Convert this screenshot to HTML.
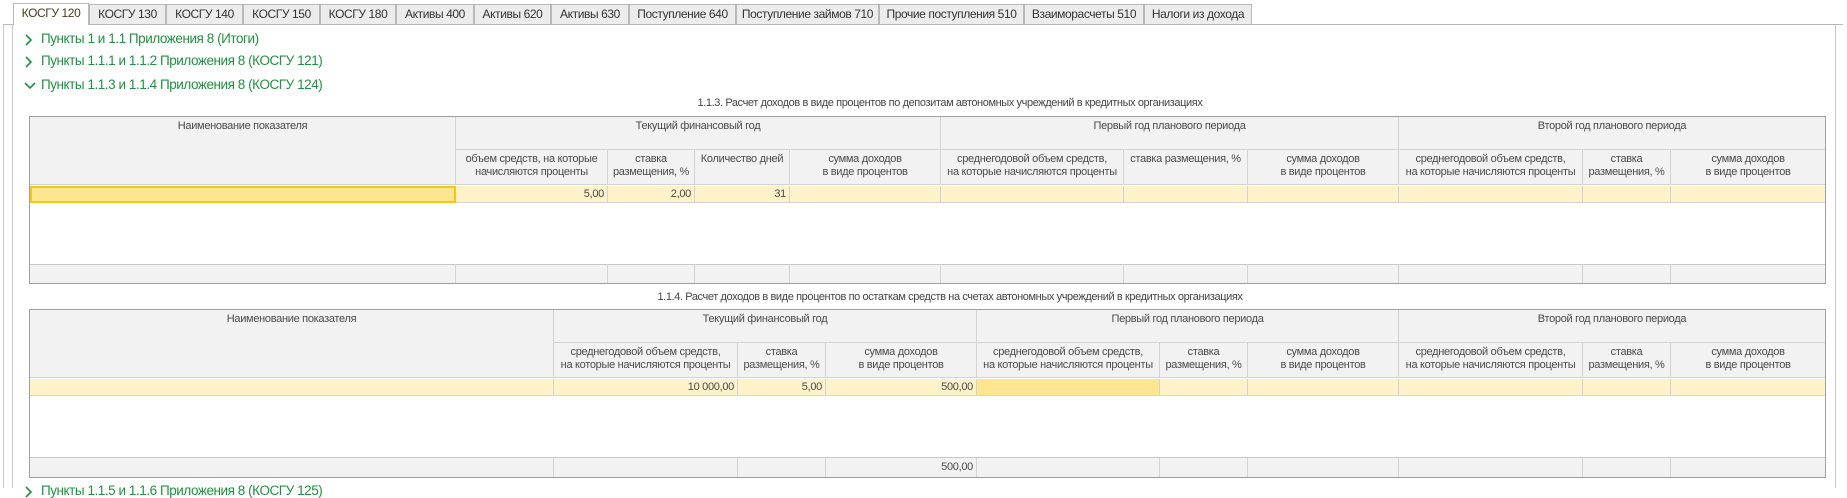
<!DOCTYPE html>
<html><head><meta charset="utf-8"><style>
*{box-sizing:border-box;margin:0;padding:0}
body{width:1847px;height:488px;background:#fff;position:relative;overflow:hidden;font-family:"Liberation Sans",Arial,sans-serif;color:#4a4a4a}
.a{position:absolute}
.tab{position:absolute;top:4px;height:20px;border:1px solid #b8b8b8;border-bottom:none;background:#ececec;font-size:12px;letter-spacing:-0.4px;line-height:19px;text-align:center;color:#333;white-space:nowrap}
.tab.act{background:#fff;top:3px;height:22px;color:#4a3a20}
.tree{position:absolute;left:24px;font-size:13.5px;letter-spacing:-0.45px;color:#1f9140;white-space:nowrap}
.tree svg{position:absolute;left:0;top:3px}
.tree span{position:absolute;left:17px;top:0}
.cap{position:absolute;font-size:11px;letter-spacing:-0.4px;color:#444;white-space:nowrap}
.c{position:absolute;border-right:1px solid #d4d4d4;border-bottom:1px solid #d4d4d4;font-size:11px;letter-spacing:-0.3px;line-height:13px;text-align:center;color:#4a4a4a;overflow:hidden;white-space:nowrap}
.h{background:#f2f2f2;padding-top:3px}
.d{background:#fdf2c8;text-align:right;padding-right:3px;line-height:17px}
.f{background:#f2f2f2;text-align:right;padding-right:3px;line-height:18px}
.box{position:absolute;border:1px solid #a0a0a0;background:#fff}
</style></head><body>
<div class="a" style="left:3px;top:24px;width:1px;height:464px;background:#c8c8c8"></div>
<div class="a" style="left:12px;top:24px;width:1px;height:464px;background:#c8c8c8"></div>
<div class="a" style="left:1835px;top:24px;width:1px;height:464px;background:#c8c8c8"></div>
<div class="a" style="left:3px;top:24px;width:1840px;height:1px;background:#b8b8b8"></div>

<div class="tab act" style="left:13px;width:76px">КОСГУ 120</div>
<div class="tab" style="left:89px;width:77px">КОСГУ 130</div>
<div class="tab" style="left:166px;width:77px">КОСГУ 140</div>
<div class="tab" style="left:243px;width:77px">КОСГУ 150</div>
<div class="tab" style="left:320px;width:76px">КОСГУ 180</div>
<div class="tab" style="left:396px;width:78px">Активы 400</div>
<div class="tab" style="left:474px;width:77px">Активы 620</div>
<div class="tab" style="left:551px;width:78px">Активы 630</div>
<div class="tab" style="left:629px;width:107px">Поступление 640</div>
<div class="tab" style="left:736px;width:143px">Поступление займов 710</div>
<div class="tab" style="left:879px;width:145px">Прочие поступления 510</div>
<div class="tab" style="left:1024px;width:120px">Взаиморасчеты 510</div>
<div class="tab" style="left:1144px;width:108px">Налоги из дохода</div>

<div class="tree" style="top:31px"><svg width="10" height="12"><path d="M2 1 L7 6 L2 11" fill="none" stroke="#1f9140" stroke-width="1.6"/></svg><span>Пункты 1 и 1.1 Приложения 8 (Итоги)</span></div>
<div class="tree" style="top:53px"><svg width="10" height="12"><path d="M2 1 L7 6 L2 11" fill="none" stroke="#1f9140" stroke-width="1.6"/></svg><span>Пункты 1.1.1 и 1.1.2 Приложения 8 (КОСГУ 121)</span></div>
<div class="tree" style="top:77px"><svg width="12" height="12"><path d="M1 3 L6 8 L11 3" fill="none" stroke="#1f9140" stroke-width="1.6"/></svg><span>Пункты 1.1.3 и 1.1.4 Приложения 8 (КОСГУ 124)</span></div>

<div class="cap" style="left:660px;top:97px;width:580px;text-align:center">1.1.3. Расчет доходов в виде процентов по депозитам автономных учреждений в кредитных организациях</div>

<div class="box" style="left:29px;top:116px;width:1797px;height:168px"></div>
<div class="c h" style="left:30px;top:117px;width:426px;height:68px">Наименование показателя</div>
<div class="c h" style="left:456px;top:117px;width:485px;height:33px">Текущий финансовый год</div>
<div class="c h" style="left:941px;top:117px;width:458px;height:33px">Первый год планового периода</div>
<div class="c h" style="left:1399px;top:117px;width:426px;height:33px;border-right:none">Второй год планового периода</div>
<div class="c h" style="left:456px;top:150px;width:152px;height:35px">объем средств, на которые<br>начисляются проценты</div>
<div class="c h" style="left:608px;top:150px;width:87px;height:35px">ставка<br>размещения, %</div>
<div class="c h" style="left:695px;top:150px;width:95px;height:35px">Количество дней</div>
<div class="c h" style="left:790px;top:150px;width:151px;height:35px">сумма доходов<br>в виде процентов</div>
<div class="c h" style="left:941px;top:150px;width:183px;height:35px">среднегодовой объем средств,<br>на которые начисляются проценты</div>
<div class="c h" style="left:1124px;top:150px;width:124px;height:35px">ставка размещения, %</div>
<div class="c h" style="left:1248px;top:150px;width:151px;height:35px">сумма доходов<br>в виде процентов</div>
<div class="c h" style="left:1399px;top:150px;width:184px;height:35px">среднегодовой объем средств,<br>на которые начисляются проценты</div>
<div class="c h" style="left:1583px;top:150px;width:88px;height:35px">ставка<br>размещения, %</div>
<div class="c h" style="left:1671px;top:150px;width:154px;height:35px;border-right:none">сумма доходов<br>в виде процентов</div>
<div class="a" style="left:30px;top:186px;width:426px;height:17px;background:#fde68f;border:2px solid #f5c518"></div>
<div class="c d" style="left:456px;top:186px;width:152px;height:17px">5,00</div>
<div class="c d" style="left:608px;top:186px;width:87px;height:17px">2,00</div>
<div class="c d" style="left:695px;top:186px;width:95px;height:17px">31</div>
<div class="c d" style="left:790px;top:186px;width:151px;height:17px"></div>
<div class="c d" style="left:941px;top:186px;width:183px;height:17px"></div>
<div class="c d" style="left:1124px;top:186px;width:124px;height:17px"></div>
<div class="c d" style="left:1248px;top:186px;width:151px;height:17px"></div>
<div class="c d" style="left:1399px;top:186px;width:184px;height:17px"></div>
<div class="c d" style="left:1583px;top:186px;width:88px;height:17px"></div>
<div class="c d" style="left:1671px;top:186px;width:154px;height:17px;border-right:none"></div>
<div class="a" style="left:30px;top:264px;width:1795px;height:1px;background:#c8c8c8"></div>
<div class="c f" style="left:30px;top:265px;width:426px;height:18px;border-bottom:none"></div>
<div class="c f" style="left:456px;top:265px;width:152px;height:18px;border-bottom:none"></div>
<div class="c f" style="left:608px;top:265px;width:87px;height:18px;border-bottom:none"></div>
<div class="c f" style="left:695px;top:265px;width:95px;height:18px;border-bottom:none"></div>
<div class="c f" style="left:790px;top:265px;width:151px;height:18px;border-bottom:none"></div>
<div class="c f" style="left:941px;top:265px;width:183px;height:18px;border-bottom:none"></div>
<div class="c f" style="left:1124px;top:265px;width:124px;height:18px;border-bottom:none"></div>
<div class="c f" style="left:1248px;top:265px;width:151px;height:18px;border-bottom:none"></div>
<div class="c f" style="left:1399px;top:265px;width:184px;height:18px;border-bottom:none"></div>
<div class="c f" style="left:1583px;top:265px;width:88px;height:18px;border-bottom:none"></div>
<div class="c f" style="left:1671px;top:265px;width:154px;height:18px;border:none"></div>

<div class="cap" style="left:610px;top:291px;width:680px;text-align:center">1.1.4. Расчет доходов в виде процентов по остаткам средств на счетах автономных учреждений в кредитных организациях</div>

<div class="box" style="left:29px;top:309px;width:1797px;height:169px"></div>
<div class="c h" style="left:30px;top:310px;width:524px;height:68px">Наименование показателя</div>
<div class="c h" style="left:554px;top:310px;width:423px;height:33px">Текущий финансовый год</div>
<div class="c h" style="left:977px;top:310px;width:422px;height:33px">Первый год планового периода</div>
<div class="c h" style="left:1399px;top:310px;width:426px;height:33px;border-right:none">Второй год планового периода</div>
<div class="c h" style="left:554px;top:343px;width:184px;height:35px">среднегодовой объем средств,<br>на которые начисляются проценты</div>
<div class="c h" style="left:738px;top:343px;width:88px;height:35px">ставка<br>размещения, %</div>
<div class="c h" style="left:826px;top:343px;width:151px;height:35px">сумма доходов<br>в виде процентов</div>
<div class="c h" style="left:977px;top:343px;width:183px;height:35px">среднегодовой объем средств,<br>на которые начисляются проценты</div>
<div class="c h" style="left:1160px;top:343px;width:88px;height:35px">ставка<br>размещения, %</div>
<div class="c h" style="left:1248px;top:343px;width:151px;height:35px">сумма доходов<br>в виде процентов</div>
<div class="c h" style="left:1399px;top:343px;width:184px;height:35px">среднегодовой объем средств,<br>на которые начисляются проценты</div>
<div class="c h" style="left:1583px;top:343px;width:88px;height:35px">ставка<br>размещения, %</div>
<div class="c h" style="left:1671px;top:343px;width:154px;height:35px;border-right:none">сумма доходов<br>в виде процентов</div>
<div class="c d" style="left:30px;top:379px;width:524px;height:17px"></div>
<div class="c d" style="left:554px;top:379px;width:184px;height:17px">10 000,00</div>
<div class="c d" style="left:738px;top:379px;width:88px;height:17px">5,00</div>
<div class="c d" style="left:826px;top:379px;width:151px;height:17px">500,00</div>
<div class="c d" style="left:977px;top:379px;width:183px;height:17px;background:#fde68f"></div>
<div class="c d" style="left:1160px;top:379px;width:88px;height:17px"></div>
<div class="c d" style="left:1248px;top:379px;width:151px;height:17px"></div>
<div class="c d" style="left:1399px;top:379px;width:184px;height:17px"></div>
<div class="c d" style="left:1583px;top:379px;width:88px;height:17px"></div>
<div class="c d" style="left:1671px;top:379px;width:154px;height:17px;border-right:none"></div>
<div class="a" style="left:30px;top:457px;width:1795px;height:1px;background:#c8c8c8"></div>
<div class="c f" style="left:30px;top:458px;width:524px;height:19px;border-bottom:none"></div>
<div class="c f" style="left:554px;top:458px;width:184px;height:19px;border-bottom:none"></div>
<div class="c f" style="left:738px;top:458px;width:88px;height:19px;border-bottom:none"></div>
<div class="c f" style="left:826px;top:458px;width:151px;height:19px;border-bottom:none">500,00</div>
<div class="c f" style="left:977px;top:458px;width:183px;height:19px;border-bottom:none"></div>
<div class="c f" style="left:1160px;top:458px;width:88px;height:19px;border-bottom:none"></div>
<div class="c f" style="left:1248px;top:458px;width:151px;height:19px;border-bottom:none"></div>
<div class="c f" style="left:1399px;top:458px;width:184px;height:19px;border-bottom:none"></div>
<div class="c f" style="left:1583px;top:458px;width:88px;height:19px;border-bottom:none"></div>
<div class="c f" style="left:1671px;top:458px;width:154px;height:19px;border:none"></div>

<div class="tree" style="top:483px"><svg width="10" height="12"><path d="M2 1 L7 6 L2 11" fill="none" stroke="#1f9140" stroke-width="1.6"/></svg><span>Пункты 1.1.5 и 1.1.6 Приложения 8 (КОСГУ 125)</span></div>
</body></html>
